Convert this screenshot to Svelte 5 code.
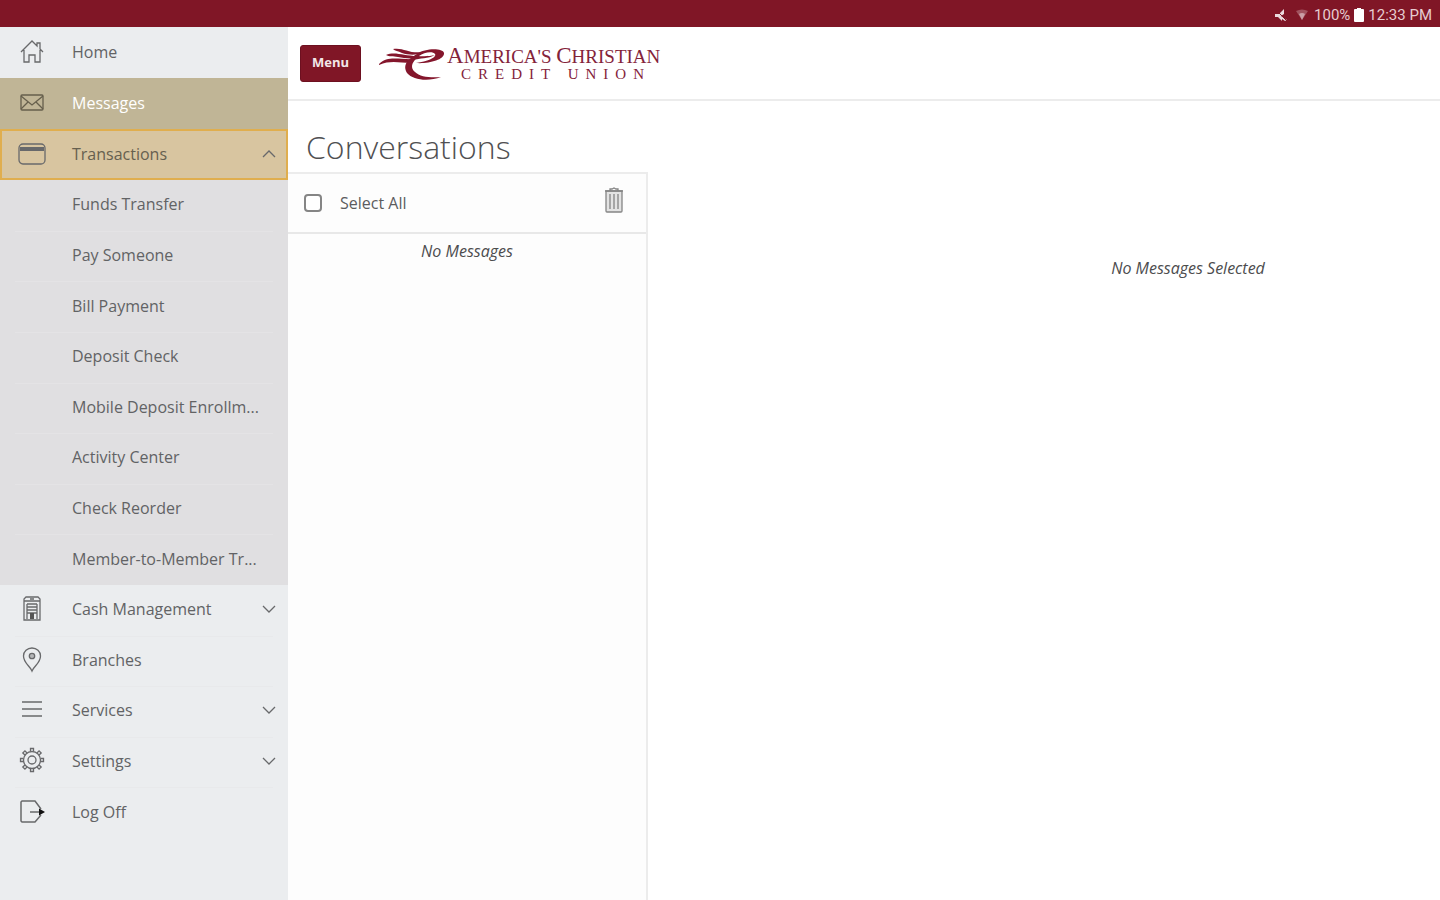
<script>
  const top = [
    { label: 'Home', icon: 'home' },
    { label: 'Messages', icon: 'mail', state: 'current' },
    { label: 'Transactions', icon: 'card', state: 'open', arrow: 'up' }
  ];
  const sub = [
    'Funds Transfer',
    'Pay Someone',
    'Bill Payment',
    'Deposit Check',
    'Mobile Deposit Enrollm...',
    'Activity Center',
    'Check Reorder',
    'Member-to-Member Tr...'
  ];
  const bottom = [
    { label: 'Cash Management', icon: 'building', arrow: 'down' },
    { label: 'Branches', icon: 'pin' },
    { label: 'Services', icon: 'list', arrow: 'down' },
    { label: 'Settings', icon: 'gear', arrow: 'down' },
    { label: 'Log Off', icon: 'logoff' }
  ];
  const teeth = [0, 45, 90, 135, 180, 225, 270, 315];
  let all = $state(false);
</script>

{#snippet glyph(name)}
  <svg class="icon" viewBox="0 0 28 28" aria-hidden="true">
    {#if name === 'home'}
      <path d="M3 14 L14 3 L19 8 V5 H22 V11 L25 14 M6 12 V24 H11 V17 H17 V24 H22 V12" />
    {:else if name === 'mail'}
      <rect x="3" y="6" width="22" height="15" rx="1" />
      <path d="M3 7 L14 16 L25 7 M3 20 L10 13 M25 20 L18 13" />
    {:else if name === 'card'}
      <rect x="1" y="4" width="26" height="20" rx="4" />
      <path d="M2 9 H26" stroke-width="4" />
    {:else if name === 'building'}
      <path d="M6 25 V4 L8 2 H20 L22 4 V25 Z M6 6 H22 M9 9 H19 M9 12 H19 M9 15 H19 M9 18 H19 M9 9 V24 M19 9 V24 M12 4 H16" />
      <path class="solid" d="M12 18 H16 V24 H12 Z" />
    {:else if name === 'pin'}
      <path d="M14 25 C12 20 5.500 17 5.500 10 A8.500 8 0 0 1 22.500 10 C22.500 17 16 20 14 25 Z" />
      <circle cx="14" cy="10" r="2.700" fill="#b5b6b8" />
    {:else if name === 'list'}
      <path d="M4 6 H24 M4 13 H24 M4 20 H24" stroke-width="1.7" />
    {:else if name === 'gear'}
      <circle cx="14" cy="13" r="8.500" />
      <circle cx="14" cy="13" r="4" />
      {#each teeth as angle}
        <path d="M12.500 4.500 V1.500 H15.500 V4.500" transform="rotate({angle} 14 13)" />
      {/each}
    {:else}
      <path d="M23 11 L17 3 H4 L3 4 V23 L4 24 H17 L23 17 M12 14 H23" stroke-width="1.500" />
      <path class="solid dark" d="M21 10.500 L27 14 L21 17.500 Z" />
    {/if}
  </svg>
{/snippet}

{#snippet entry(item)}
  <li>
    <a href="#{item.icon}" class="row {item.state ?? ''}" aria-current={item.state === 'current' ? 'page' : undefined}>
      {@render glyph(item.icon)}
      <span class="label">{item.label}</span>
      {#if item.arrow}
        <svg class="chevron" viewBox="0 0 14 14" aria-hidden="true">
          <path d={item.arrow === 'up' ? 'M1 10 L7 4 L13 10' : 'M1 4 L7 10 L13 4'} />
        </svg>
      {/if}
    </a>
  </li>
{/snippet}

<div class="app">
  <div class="status">
    <svg class="mute" viewBox="0 0 14 14" aria-hidden="true">
      <path d="M1 6 L5 6 L10 1 V6 L7 8 L13 12 L11 13 L8 11 V13 L4 9 H1 Z" />
      <path d="M1 1 L13 13" stroke="#801626" />
    </svg>
    <svg class="wifi" viewBox="0 0 12 12" aria-hidden="true">
      <path d="M0 2 Q6 -1 12 2 L6 11 Z" opacity=".45" />
      <path d="M3 5 Q6 3 9 5 L6 11 Z" />
    </svg>
    <span>100%</span>
    <svg class="battery" viewBox="0 0 10 14" aria-hidden="true"><path d="M3 0 H7 V1 H9 Q10 1 10 2 V13 Q10 14 9 14 H1 Q0 14 0 13 V2 Q0 1 1 1 H3 Z" /></svg>
    <span>12:33 PM</span>
  </div>

  <div class="shell">
    <nav aria-label="Main menu">
      <ul>
        {#each top as item}{@render entry(item)}{/each}
      </ul>
      <ul class="sub">
        {#each sub as label}
          <li><a href="#transactions" class="row"><span class="label">{label}</span></a></li>
        {/each}
      </ul>
      <ul class="bottom">
        {#each bottom as item}{@render entry(item)}{/each}
      </ul>
    </nav>

    <main>
      <header>
        <button type="button" class="menu">Menu</button>
        <div class="brand">
          <svg class="mark" viewBox="0 0 66 34" aria-hidden="true">
            <path d="M14 2 C24 0 30 7 44 5 C38 9 29 8 23 6 C19 4 16 4 14 2 Z" />
            <path d="M7 8 C17 4 26 10 42 9 C34 13 26 11 19 10 C14 9 10 10 7 8 Z" />
            <path d="M0 17 C9 8 20 13 36 12 L32 16 C20 16 12 13 0 18 Z" />
            <path d="M38 7 C46 1 64 1 65 6 C66 13 49 17 37 16 C50 14 58 10 56 7 C54 4 45 5 40 9 C34 14 30 20 36 25 C41 30 52 31 62 30 C49 35 34 33 28 26 C23 18 29 12 38 7 Z" />
            <path d="M34 11 C42 8 49 10 56 8 C49 12 41 11 34 13 Z" />
          </svg>
          <div class="words">
            <div class="name"><span class="cap">A</span>MERICA'S <span class="cap">C</span>HRISTIAN</div>
            <div class="kind">CREDIT UNION</div>
          </div>
        </div>
      </header>

      <h1>Conversations</h1>
      <div class="panes">
        <section class="inbox">
          <div class="tools">
            <label><input type="checkbox" bind:checked={all} />Select All</label>
            <button type="button" class="trash" aria-label="Delete">
              <svg viewBox="0 0 20 26" aria-hidden="true">
                <path d="M2 4 V24 Q2 25 3 25 H17 Q18 25 18 24 V4 Z" fill="#e3e3e3" />
                <path d="M1 4 H19 M6 4 V2 H8 L10 1 L12 2 H14 V4 M6 7 V22 M10 7 V22 M14 7 V22" />
              </svg>
            </button>
          </div>
          <p>No Messages</p>
        </section>
        <section class="detail"><p>No Messages Selected</p></section>
      </div>
    </main>
  </div>
</div>

<style>
  :global(body) { margin: 0; }
  * { box-sizing: border-box; }
  .app {
    display: flex;
    flex-direction: column;
    min-height: 100vh;
    overflow: hidden;
    background: #fff;
    color: #5c5c5e;
    font: 16px/24px "Open Sans", sans-serif;
  }
  .status {
    display: flex;
    align-items: center;
    justify-content: flex-end;
    height: 27px;
    padding: 2px 8px 0;
    gap: 4px;
    background: #801626;
    color: #e6ccd0;
    font: 15px/24px Roboto, sans-serif;
  }
  .status svg { fill: #eadadd; }
  .mute { width: 14px; height: 14px; margin-right: 4px; }
  .mute path { stroke-width: 1; }
  .wifi { width: 12px; height: 12px; margin-right: 2px; opacity: .7; }
  .battery { width: 10px; height: 14px; }
  .status .battery { fill: #fff; }

  .shell { display: flex; flex: 1; }
  nav { flex: none; width: 20%; background: #ebedef; }
  ul { list-style: none; margin: 0; padding: 0; }
  .sub, .bottom { display: grid; grid-auto-rows: 1fr; }
  .sub { min-height: 405px; background: #e0dfe1; }
  .sub li + li {
    background: linear-gradient(#e4e3e5, #e4e3e5) center top / 258px 1px no-repeat;
  }
  .bottom li + li {
    background: linear-gradient(#e8e9eb, #e8e9eb) center top / 258px 1px no-repeat;
  }
  .bottom { min-height: 253px; }
  .row {
    display: flex;
    align-items: center;
    height: 100%;
    min-height: 50px;
    padding: 0 12px 2px 18px;
    color: #626365;
    text-decoration: none;
  }
  ul:first-child .row { min-height: 51px; }
  .row.current { background: #c0b596; color: #fff; }
  .row.open { border: 2px solid #e0ae4e; padding: 0 10px 2px 16px; background: #d8c5a0; color: #66604f; }
  .sub .row { padding-left: 72px; }
  .label { flex: 1; white-space: nowrap; }
  .icon { flex: none; width: 28px; height: 28px; margin-right: 26px; }
  .icon, .chevron, .trash svg { fill: none; stroke: #68696b; stroke-width: 1.3; }
  .current .icon { stroke: #665f4c; }
  .icon .solid { fill: #555; stroke: none; }
  .icon .dark { fill: #111; }
  .chevron { width: 14px; height: 14px; }

  main { flex: none; display: flex; flex-direction: column; width: 100vw; }
  header {
    display: flex;
    align-items: center;
    gap: 18px;
    height: 74px;
    padding: 1px 12px 0;
    border-bottom: 2px solid #ececec;
  }
  .menu {
    width: 61px;
    height: 37px;
    padding: 0 0 3px;
    border: 1px solid #6d1020;
    border-radius: 3px;
    background: #801626;
    color: #f3e6e8;
    font: 700 13px/20px "Open Sans", sans-serif;
  }
  .brand { display: flex; align-items: center; gap: 2px; color: #84233a; }
  .mark { width: 66px; height: 34px; fill: #84162c; }
  .words { font-family: "Liberation Serif", serif; white-space: nowrap; }
  .name { font-size: 19px; line-height: 20px; }
  .cap { font-size: 23px; line-height: 20px; }
  .kind { padding-left: 14px; font-size: 15px; line-height: 14px; letter-spacing: 7px; }
  h1 {
    margin: 0;
    padding: 26px 18px 5px;
    font-size: 32px;
    line-height: 40px;
    font-weight: 300;
    color: #505052;
  }
  .panes { display: flex; flex: 1; }
  .inbox { width: 25%; border: 2px solid #ececec; border-width: 2px 2px 0 0; background: #fdfdfd; }
  .tools {
    display: flex;
    align-items: center;
    justify-content: space-between;
    height: 60px;
    padding: 0 22px 0 16px;
    border-bottom: 2px solid #e8e8e8;
  }
  label { display: flex; align-items: center; gap: 18px; }
  input { appearance: none; width: 18px; height: 18px; margin: 0; border: 2px solid #858585; border-radius: 4px; background: #fff; }
  input:checked { background: #801626; }
  .trash { padding: 0 0 6px; border: 0; background: none; }
  .trash svg { display: block; width: 20px; height: 26px; stroke: #858585; }
  p { margin: 0; font-style: italic; text-align: center; color: #4c4c4e; }
  .inbox p { padding-top: 5px; }
  .detail { flex: 1; padding-top: 84px; }
</style>
